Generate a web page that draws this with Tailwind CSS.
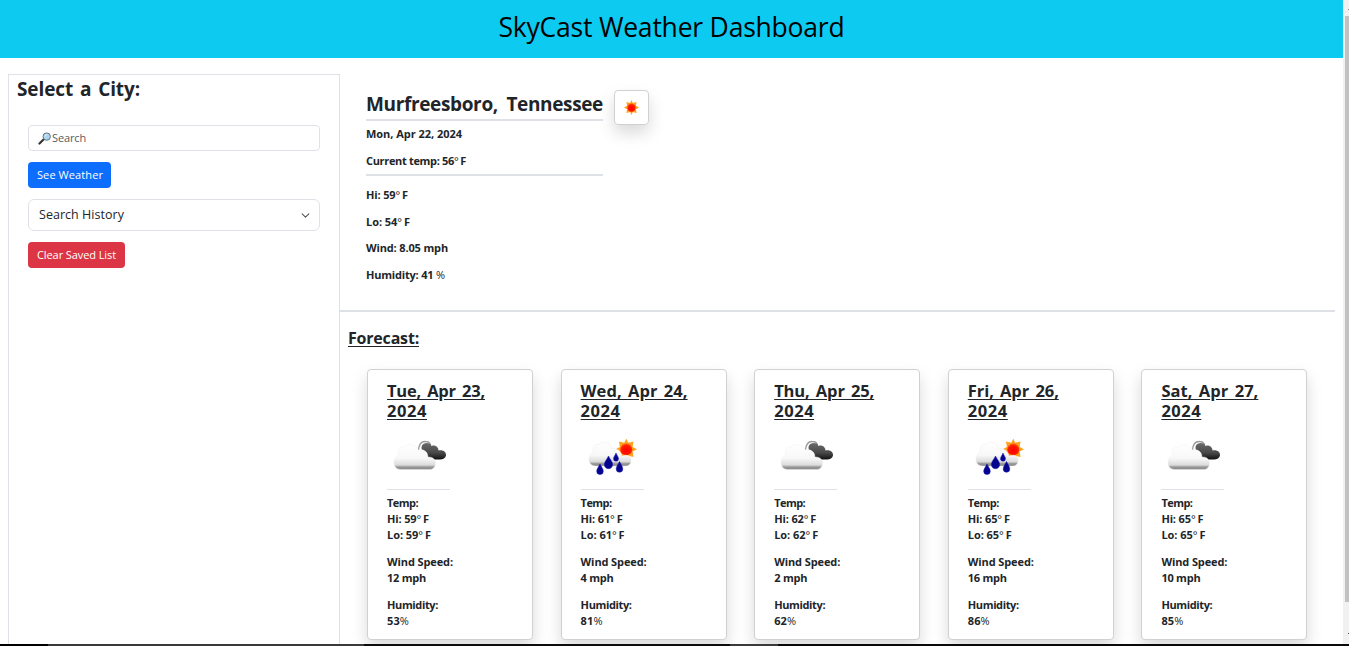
<!DOCTYPE html>
<html lang="en">
<head>
<meta charset="utf-8">
<title>SkyCast Weather Dashboard</title>
<script src="https://cdn.jsdelivr.net/npm/@tailwindcss/browser@4"></script>
</head>
<body class="h-[646px] overflow-hidden bg-white font-['Open_Sans','Noto_Sans',sans-serif] text-[#212529]">
<svg class="absolute h-0 w-0">
  <defs>
    <linearGradient id="white" x1="0" y1="0" x2="0" y2="1"><stop offset="0" stop-color="#fff"/><stop offset=".55" stop-color="#f8f8f8"/><stop offset=".82" stop-color="#dcdcdc"/><stop offset=".9" stop-color="#999"/><stop offset="1" stop-color="#888"/></linearGradient>
    <linearGradient id="dark" x1="0" y1="0" x2="0" y2="1"><stop offset="0" stop-color="#6a6a6a"/><stop offset=".6" stop-color="#484848"/><stop offset="1" stop-color="#111"/></linearGradient>
    <radialGradient id="hot" cx=".5" cy=".62" r=".65"><stop offset="0" stop-color="#f00"/><stop offset=".65" stop-color="#ff1a00"/><stop offset="1" stop-color="#ff8a20"/></radialGradient>
    <symbol id="sun" viewBox="-10 -10 20 20">
      <path fill="#ffa21c" d="M0-10 1.800-6 6.800-7.200 5.900-2.200 10 0 5.900 2.200 6.800 7.200 1.800 6 0 10-1.800 6-6.800 7.200-5.900 2.200-10 0-5.900-2.200-6.800-7.200-1.800-6Z"/>
      <circle r="5.600" fill="url(#hot)"/>
    </symbol>
    <symbol id="clouds" viewBox="0 0 63 63">
      <path d="M31.500 25C32 19 35 16.300 38.500 16.500C41 16.500 43 18 43.500 20" fill="none" stroke="#999" stroke-width="1.300"/>
      <path fill="url(#dark)" d="M34.500 22C35 17.500 43 16.500 44.500 21C48 19.500 51.500 22 51.500 25.500C56 24.500 59.500 27 59 30.500C58.500 33 56 34.500 53 34.500H46L38 32C36 28 34.500 26 34.500 22Z"/>
      <path fill="url(#white)" stroke="#ededed" stroke-width=".4" d="M14 44.500C9 44.500 7 41 7 37.500C7 34 8.500 31.500 11.500 30.500C10 24 13 21.500 17 22C21 17.500 29 19 31 25C36 23.500 41 26.500 41 32C45.500 31.500 48.500 34.500 48.500 38C48.500 42 46 44.500 43 44.500Z"/>
    </symbol>
    <symbol id="rain" viewBox="0 0 63 63">
      <use href="#sun" x="34.500" y="13.500" width="21.500" height="21.500"/>
      <path fill="url(#white)" stroke="#e8e8e8" stroke-width=".4" d="M15 41C10 41 8 38 8 34C8 30.500 9.500 28.500 12 27.500C11.500 22 14 18.500 18 19.500C21 15.500 29 16.500 31 23.500C36 23 40 26 41 31C46 29 50 31 50 35C50 39 48 41 44 41Z"/>
      <g fill="#04048f" stroke="#1a1ab8" stroke-width=".5">
        <path d="M19 39C20.500 42 22.300 44 22.300 46.300A3.300 3.300 0 0 1 15.700 46.300C15.700 44 17.500 42 19 39Z"/>
        <path d="M27.500 31C29.500 35 31.700 37 31.700 39.500A4.200 4.200 0 0 1 23.300 39.500C23.300 37 25.500 35 27.500 31Z"/>
        <path d="M35 28C36 30.500 37.500 32 37.500 33.700A2.500 2.500 0 0 1 32.500 33.700C32.500 32 34 30.500 35 28Z"/>
        <path d="M38.500 36.500C40 39.500 41.800 41.500 41.800 44A3.300 3.300 0 0 1 35.200 44C35.200 41.500 37 39.500 38.500 36.500Z"/>
      </g>
    </symbol>
  </defs>
</svg>

<div class="flex h-[644px]">
  <div class="min-w-0 flex-1">
    <header class="flex h-[58px] items-center justify-center bg-[#0dcaf0] pb-[4px] text-black">
      <h1 class="whitespace-nowrap text-[26.5px] leading-8"><span data-w="346">SkyCast Weather Dashboard</span></h1>
    </header>
    <main class="flex px-2 pt-4">
      <aside class="h-[580px] w-[332px] shrink-0 border border-[#dee2e6] pl-2">
        <h2 class="h-[50px] text-[19px] leading-[28px] font-bold [word-spacing:2px]"><span data-w="123">Select a City:</span></h2>
        <div class="ml-[11px] flex w-[292px] flex-col items-start gap-[11px]">
          <div class="flex h-[26px] w-full items-center rounded border border-[#dee2e6] pl-[9px] text-[11px] text-[#595c5f]">
            <svg class="h-[13px] w-[14px]" viewBox="0 0 14 13"><path d="M1.500 11.500 6 7" stroke="#333" stroke-width="2.200" stroke-linecap="round"/><circle cx="8.700" cy="4.600" r="3.700" fill="#a9d3ef" stroke="#68737c" stroke-width="1"/><path d="M7 4.500Q7.200 2.700 9 2.500" fill="none" stroke="#e4f4ff"/></svg>
            <span data-w="34">Search</span>
          </div>
          <button class="flex h-[26px] w-[83px] items-center rounded bg-[#0d6efd] pl-[9px] text-[11px] whitespace-nowrap text-white"><span data-w="66">See Weather</span></button>
          <div class="flex h-8 w-full items-center justify-between rounded-md border border-[#dee2e6] pr-[9px] pl-[10px] text-[12.5px]">
            <span class="pt-px" data-w="85">Search History</span>
            <svg class="h-[9px] w-[9px]" viewBox="0 0 16 16" fill="none" stroke="#4b5157" stroke-width="1.800" stroke-linecap="round" stroke-linejoin="round"><path d="m2 5 6 6 6-6"/></svg>
          </div>
          <button class="flex h-[26px] w-[97px] items-center rounded bg-[#dc3545] pl-[9px] text-[11px] whitespace-nowrap text-white"><span data-w="79">Clear Saved List</span></button>
        </div>
      </aside>
      <div class="min-w-0 flex-1">
        <section class="flex h-[238px] items-start gap-[11px] border-b-2 border-[#dee2e6] pt-4 pl-[26px]">
          <div class="w-[237px] text-[11px] leading-4 font-bold whitespace-nowrap">
            <h2 class="h-[31px] border-b-2 border-[#dee2e6] text-[19px] leading-[28px] [word-spacing:4px]"><span data-w="237">Murfreesboro, Tennessee</span></h2>
            <p class="mt-[5px]"><span data-w="96">Mon, Apr 22, 2024</span></p>
            <p class="mt-[11px] h-[23px] border-b-2 border-[#dee2e6]"><span data-w="100">Current temp: 56<span class="mr-[2px] font-normal">°</span>F</span></p>
            <p class="mt-[11px]"><span data-w="42">Hi: 59<span class="mr-[2px] font-normal">°</span>F</span></p>
            <p class="mt-[11px]"><span data-w="44">Lo: 54<span class="mr-[2px] font-normal">°</span>F</span></p>
            <p class="mt-[10px]"><span data-w="82">Wind: 8.05 mph</span></p>
            <p class="mt-[11px]"><span data-w="79">Humidity: 41 <span class="font-normal">%</span></span></p>
          </div>
          <div class="flex h-[35px] w-[35px] items-center justify-center rounded border border-[#d0d1d2] shadow-[0_8px_16px_rgba(0,0,0,0.15)]">
            <svg class="h-[15px] w-[15px]"><use href="#sun"/></svg>
          </div>
        </section>
        <section>
          <h3 class="h-[57px] pt-[14px] pl-2 text-[16px] leading-6 font-bold underline underline-offset-2"><span data-w="71">Forecast:</span></h3>
          <div id="cards" class="flex gap-[27.6px] pl-[27px]"></div>
        </section>
      </div>
    </main>
  </div>
  <div class="flex w-[6px] flex-col items-end bg-[#f1f1f1]">
    <div class="mt-[9px] h-px w-px bg-[#888]"></div>
    <div class="mt-[6px] h-[586px] w-1 bg-[#c1c1c1]"></div>
    <div class="mt-[31px] h-px w-px bg-[#505050]"></div>
  </div>
</div>
<div class="flex h-[2px] bg-[#0b090b]"><i class="w-12 bg-black"></i><i class="w-[316px] bg-[#3b393b]"></i><i class="w-[366px] bg-[#0d0b0d]"></i><i class="w-[48px] bg-[#3b393b]"></i></div>

<script>
const days = [
  ['Tue, Apr 23,', 98, 'clouds', 59, 12, 53, 39],
  ['Wed, Apr 24,', 107, 'rain', 61, 4, 81, 33],
  ['Thu, Apr 25,', 100, 'clouds', 62, 2, 62, 33],
  ['Fri, Apr 26,', 91, 'rain', 65, 16, 86, 39],
  ['Sat, Apr 27,', 97, 'clouds', 65, 10, 85, 39],
];
document.getElementById('cards').innerHTML = days.map(([d, w, icon, t, wind, hum, ww]) => `
  <article class="h-[271px] w-[166px] shrink-0 rounded border border-[#d0d1d2] bg-white pt-[11px] pl-[19px] text-[11px] leading-4 font-bold whitespace-nowrap shadow-[0_8px_16px_rgba(0,0,0,0.15)]">
    <h4 class="text-[16.5px] leading-5 underline underline-offset-2 [word-spacing:2px]"><span data-w="${w}">${d}</span><br><span data-w="40">2024</span></h4>
    <svg class="mt-1 block h-[63px] w-[63px]"><use href="#${icon}"/></svg>
    <div class="mt-px mb-[5px] h-px w-[63px] bg-[#dee2e6]"></div>
    <p class="mb-[11px]"><span data-w="31">Temp:</span><br><span data-w="42">Hi: ${t}<span class="mr-[2px] font-normal">°</span>F</span><br><span data-w="44">Lo: ${t}<span class="mr-[2px] font-normal">°</span>F</span></p>
    <p class="mb-[11px]"><span data-w="66">Wind Speed:</span><br><span data-w="${ww}">${wind} mph</span></p>
    <p><span data-w="51">Humidity:</span><br><span data-w="22">${hum}<span class="font-normal">%</span></span></p>
  </article>`).join('');

// Even out the tracking so each label keeps its set width
function fitLabels() {
  document.querySelectorAll('[data-w]').forEach(el => {
    el.style.letterSpacing = '0px';
    const diff = el.dataset.w - el.getBoundingClientRect().width;
    el.style.letterSpacing = diff / el.textContent.length + 'px';
  });
}
fitLabels();
window.addEventListener('load', fitLabels);
document.fonts.ready.then(fitLabels);
</script>
</body>
</html>
